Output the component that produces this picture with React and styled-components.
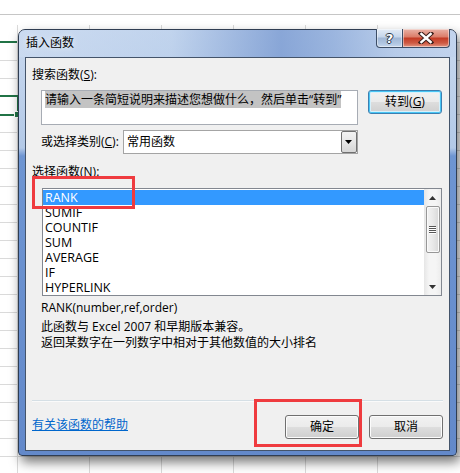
import React from "react";
import styled, { createGlobalStyle } from "styled-components";

const GlobalStyle = createGlobalStyle`
  html, body { margin: 0; padding: 0; background: #fff; }
  body { font-family: "Open Sans", "Noto Sans CJK SC", sans-serif; font-size: 12px; color: #000; }
`;

const Desk = styled.div`
  position: relative;
  width: 460px;
  height: 473px;
  overflow: hidden;
  background: #fff;
  display: flex;
  flex-direction: column;
`;

const SheetTop = styled.div`
  height: 14px;
  border-bottom: 1px solid #c6c6c6;
  margin-bottom: 10px;
  flex: none;
`;

const Sheet = styled.div`
  flex: 1;
  background-image:
    repeating-linear-gradient(to bottom, transparent 0 17px, #dadada 17px 18px),
    repeating-linear-gradient(to right, transparent 0 71px, #dadada 71px 72px);
  background-position: 0 0, -54px 0;
`;

const GreenLine = styled.div`
  position: absolute;
  left: 0;
  top: ${(p) => p.$top}px;
  width: 17px;
  height: 2px;
  background: #217346;
`;

const SelectedCell = styled.div`
  position: absolute;
  left: -3px;
  top: 95px;
  width: 18px;
  height: 17px;
  border: 2px solid #217346;
  &::after {
    content: "";
    position: absolute;
    right: -4px;
    bottom: -4px;
    width: 5px;
    height: 5px;
    background: #217346;
    border: 1px solid #fff;
  }
`;

const Window = styled.div`
  position: absolute;
  left: 18px;
  top: 29px;
  width: 439px;
  height: 427px;
  box-sizing: border-box;
  border: 1px solid #2f3d52;
  border-radius: 7px 7px 4px 4px;
  background: linear-gradient(180deg, #c9d9ef 0px, #b3c9e7 118px, #6e95d2 126px, #6389ca 100%);
  box-shadow: 3px 6px 12px rgba(0, 0, 0, 0.55);
  display: flex;
  flex-direction: column;
  padding: 0 6px 4px 6px;
`;

const TitleBar = styled.div`
  height: 27px;
  flex: none;
  display: flex;
  align-items: flex-start;
  margin: 0 -6px;
  padding: 0 6px;
  border-radius: 6px 6px 0 0;
  background: linear-gradient(90deg, rgba(205,220,241,0.6) 0%, rgba(180,203,234,0.4) 35%, rgba(110,145,205,0.7) 60%, rgba(125,158,212,0.6) 72%, rgba(168,192,229,0.5) 86%, rgba(190,208,236,0.5) 100%);
`;

const Title = styled.div`
  line-height: 26px;
  padding-left: 1px;
  font-size: 12px;
  color: #000;
  text-shadow: 0 0 6px rgba(255, 255, 255, 0.9);
`;

const CaptionButtons = styled.div`
  margin-left: auto;
  margin-top: -1px;
  display: flex;
`;

const CaptionButton = styled.div`
  height: 19px;
  width: ${(p) => p.$w}px;
  box-sizing: border-box;
  border: 1px solid #3c4d66;
  border-top: none;
  border-left-width: ${(p) => (p.$close ? 0 : 1)}px;
  border-radius: ${(p) => (p.$close ? "0 0 4px 0" : "0 0 0 4px")};
  background: ${(p) =>
    p.$close
      ? "linear-gradient(180deg, #e9b2a6 0%, #dc7f6c 42%, #c43d27 52%, #cf5a43 78%, #e29684 100%)"
      : "linear-gradient(180deg, #e4ecf6 0%, #c7d7ec 42%, #a2b8d6 52%, #b0c6e2 80%, #c7d8ee 100%)"};
  box-shadow: inset 0 0 0 1px rgba(255, 255, 255, 0.45);
  display: flex;
  align-items: center;
  justify-content: center;
`;

const HelpGlyph = styled.span`
  font-family: "DejaVu Sans", sans-serif;
  font-weight: bold;
  font-size: 13px;
  line-height: 17px;
  color: #fff;
  text-shadow: 1px 0 0 #2a3547, -1px 0 0 #2a3547, 0 1px 0 #2a3547, 0 -1px 0 #2a3547;
`;

const Client = styled.div`
  flex: 1;
  border: 1px solid #44546a;
  background: #f0f0f0;
  display: flex;
  flex-direction: column;
  padding: 9px 6px 11px 6px;
`;

const Label = styled.div`
  line-height: 16px;
  margin-top: ${(p) => p.$mt || 0}px;
  margin-left: ${(p) => p.$ml || 0}px;
  white-space: nowrap;
`;

const Key = styled.span`
  text-decoration: underline;
`;

const SearchRow = styled.div`
  display: flex;
  align-items: flex-start;
  gap: 10px;
  margin: 7px 0 0 9px;
`;

const SearchBox = styled.div`
  width: 317px;
  height: 35px;
  box-sizing: border-box;
  border: 1px solid #a7acb4;
  background: #fff;
  padding: 2px 3px;
  line-height: 14px;
  white-space: nowrap;
`;

const Selected = styled.span`
  background: #c3c3c3;
  color: #000;
`;

const Button = styled.div`
  width: 74px;
  height: 24px;
  box-sizing: border-box;
  border: 1px solid ${(p) => (p.$focus ? "#3c7fb1" : "#707070")};
  border-radius: 3px;
  background: linear-gradient(180deg, #f2f2f2 0%, #ebebeb 48%, #dddddd 52%, #cfcfcf 100%);
  box-shadow: ${(p) =>
    p.$focus ? "inset 0 0 0 1px #48c6f5, inset 0 0 0 2px #d6f1fc" : "inset 0 0 0 1px #fcfcfc"};
  display: flex;
  align-items: center;
  justify-content: center;
  line-height: 16px;
  flex: none;
`;

const CategoryRow = styled.div`
  display: flex;
  align-items: center;
  margin: 5px 0 0 9px;
`;

const CategoryLabel = styled.div`
  width: 82px;
  line-height: 16px;
  white-space: nowrap;
`;

const Select = styled.div`
  width: 235px;
  height: 24px;
  box-sizing: border-box;
  border: 1px solid #a4a4a4;
  background: #fff;
  display: flex;
  align-items: center;
  padding: 0 0 0 3px;
`;

const SelectValue = styled.div`
  flex: 1;
  line-height: 16px;
`;

const DropButton = styled.div`
  width: 16px;
  height: 22px;
  box-sizing: border-box;
  border: 1px solid #707070;
  border-radius: 2px;
  background: linear-gradient(180deg, #f3f3f3 0%, #e6e6e6 50%, #d6d6d6 100%);
  display: flex;
  align-items: center;
  justify-content: center;
`;

const List = styled.div`
  width: 400px;
  height: 108px;
  box-sizing: border-box;
  margin: 8px 0 0 10px;
  border: 1px solid #828790;
  background: #fff;
  display: flex;
`;

const Items = styled.div`
  flex: 1;
  padding-top: 1px;
`;

const Item = styled.div`
  height: 15px;
  line-height: 15px;
  overflow: hidden;
  padding-left: 2px;
  font-size: 12.5px;
  background: ${(p) => (p.$active ? "#3399ff" : "transparent")};
  color: ${(p) => (p.$active ? "#fff" : "#000")};
`;

const ScrollBar = styled.div`
  width: 17px;
  background: linear-gradient(90deg, #e6e6e6 0%, #f5f5f5 30%, #f5f5f5 70%, #ececec 100%);
  display: flex;
  flex-direction: column;
  align-items: center;
`;

const Arrow = styled.div`
  height: 17px;
  display: flex;
  align-items: center;
  justify-content: center;
`;

const Track = styled.div`
  flex: 1;
`;

const Thumb = styled.div`
  width: 14px;
  height: 47px;
  box-sizing: border-box;
  border: 1px solid #979797;
  border-radius: 2px;
  background: linear-gradient(90deg, #f3f3f3 0%, #e8e8e8 50%, #d8d8d8 100%);
  box-shadow: inset 0 0 0 1px #fafafa;
  display: flex;
  flex-direction: column;
  align-items: center;
  justify-content: center;
  gap: 1px;
`;

const Grip = styled.div`
  width: 7px;
  height: 1px;
  background: #555;
  box-shadow: 0 1px 0 #fff;
`;

const Description = styled.div`
  margin: 3px 0 0 9px;
  line-height: 16px;
`;

const Footer = styled.div`
  margin-top: auto;
  display: flex;
  flex-direction: column;
`;

const Separator = styled.div`
  height: 1px;
  background: #d5dfe5;
  box-shadow: 0 1px 0 #fafafa;
`;

const FooterRow = styled.div`
  display: flex;
  align-items: center;
  margin-top: 14px;
`;

const HelpLink = styled.a`
  color: #0066cc;
  text-decoration: underline;
  line-height: 16px;
  margin-top: -4px;
  cursor: pointer;
`;

const Buttons = styled.div`
  margin-left: auto;
  display: flex;
  gap: 10px;
`;

const Annotation = styled.div`
  position: absolute;
  left: ${(p) => p.$x}px;
  top: ${(p) => p.$y}px;
  width: ${(p) => p.$w}px;
  height: ${(p) => p.$h}px;
  box-sizing: border-box;
  border: 3px solid #ef3b3f;
  pointer-events: none;
`;

const functions = ["RANK", "SUMIF", "COUNTIF", "SUM", "AVERAGE", "IF", "HYPERLINK"];

export default function App() {
  return (
    <>
      <GlobalStyle />
      <Desk>
        <SheetTop />
        <Sheet />
        <GreenLine $top={41} />
        <SelectedCell />

        <Window>
          <TitleBar>
            <Title>插入函数</Title>
            <CaptionButtons>
              <CaptionButton $w={27}>
                <HelpGlyph>?</HelpGlyph>
              </CaptionButton>
              <CaptionButton $w={47} $close>
                <svg width="16" height="12" viewBox="0 0 16 12">
                  <path d="M3 1.5 L13 10.5 M13 1.5 L3 10.5" stroke="#3a1e1a" strokeWidth="4.4" strokeLinecap="square" />
                  <path d="M3.4 2 L12.6 10 M12.6 2 L3.4 10" stroke="#fff" strokeWidth="2.4" strokeLinecap="square" />
                </svg>
              </CaptionButton>
            </CaptionButtons>
          </TitleBar>

          <Client>
            <Label>
              搜索函数(<Key>S</Key>):
            </Label>
            <SearchRow>
              <SearchBox>
                <Selected>请输入一条简短说明来描述您想做什么，然后单击“转到”</Selected>
              </SearchBox>
              <Button $focus>
                转到(<Key>G</Key>)
              </Button>
            </SearchRow>

            <CategoryRow>
              <CategoryLabel>
                或选择类别(<Key>C</Key>):
              </CategoryLabel>
              <Select>
                <SelectValue>常用函数</SelectValue>
                <DropButton>
                  <svg width="8" height="5" viewBox="0 0 8 5">
                    <path d="M0 0 H7 L3.5 4 Z" fill="#000" />
                  </svg>
                </DropButton>
              </Select>
            </CategoryRow>

            <Label $mt={10}>
              选择函数(<Key>N</Key>):
            </Label>
            <List>
              <Items>
                {functions.map((f, i) => (
                  <Item key={f} $active={i === 0}>
                    {f}
                  </Item>
                ))}
              </Items>
              <ScrollBar>
                <Arrow>
                  <svg width="7" height="4" viewBox="0 0 7 4">
                    <path d="M3.5 0 L7 4 H0 Z" fill="#333" />
                  </svg>
                </Arrow>
                <Thumb>
                  <Grip />
                  <Grip />
                  <Grip />
                  <Grip />
                </Thumb>
                <Track />
                <Arrow>
                  <svg width="7" height="4" viewBox="0 0 7 4">
                    <path d="M0 0 H7 L3.5 4 Z" fill="#333" />
                  </svg>
                </Arrow>
              </ScrollBar>
            </List>

            <Label $mt={4} $ml={9}>
              RANK(number,ref,order)
            </Label>
            <Description>
              此函数与 Excel 2007 和早期版本兼容。
              <br />
              返回某数字在一列数字中相对于其他数值的大小排名
            </Description>

            <Footer>
              <Separator />
              <FooterRow>
                <HelpLink>有关该函数的帮助</HelpLink>
                <Buttons>
                  <Button>确定</Button>
                  <Button>取消</Button>
                </Buttons>
              </FooterRow>
            </Footer>
          </Client>
        </Window>

        <Annotation $x={32} $y={176} $w={103} $h={33} />
        <Annotation $x={254} $y={399} $w={108} $h={48} />
      </Desk>
    </>
  );
}
